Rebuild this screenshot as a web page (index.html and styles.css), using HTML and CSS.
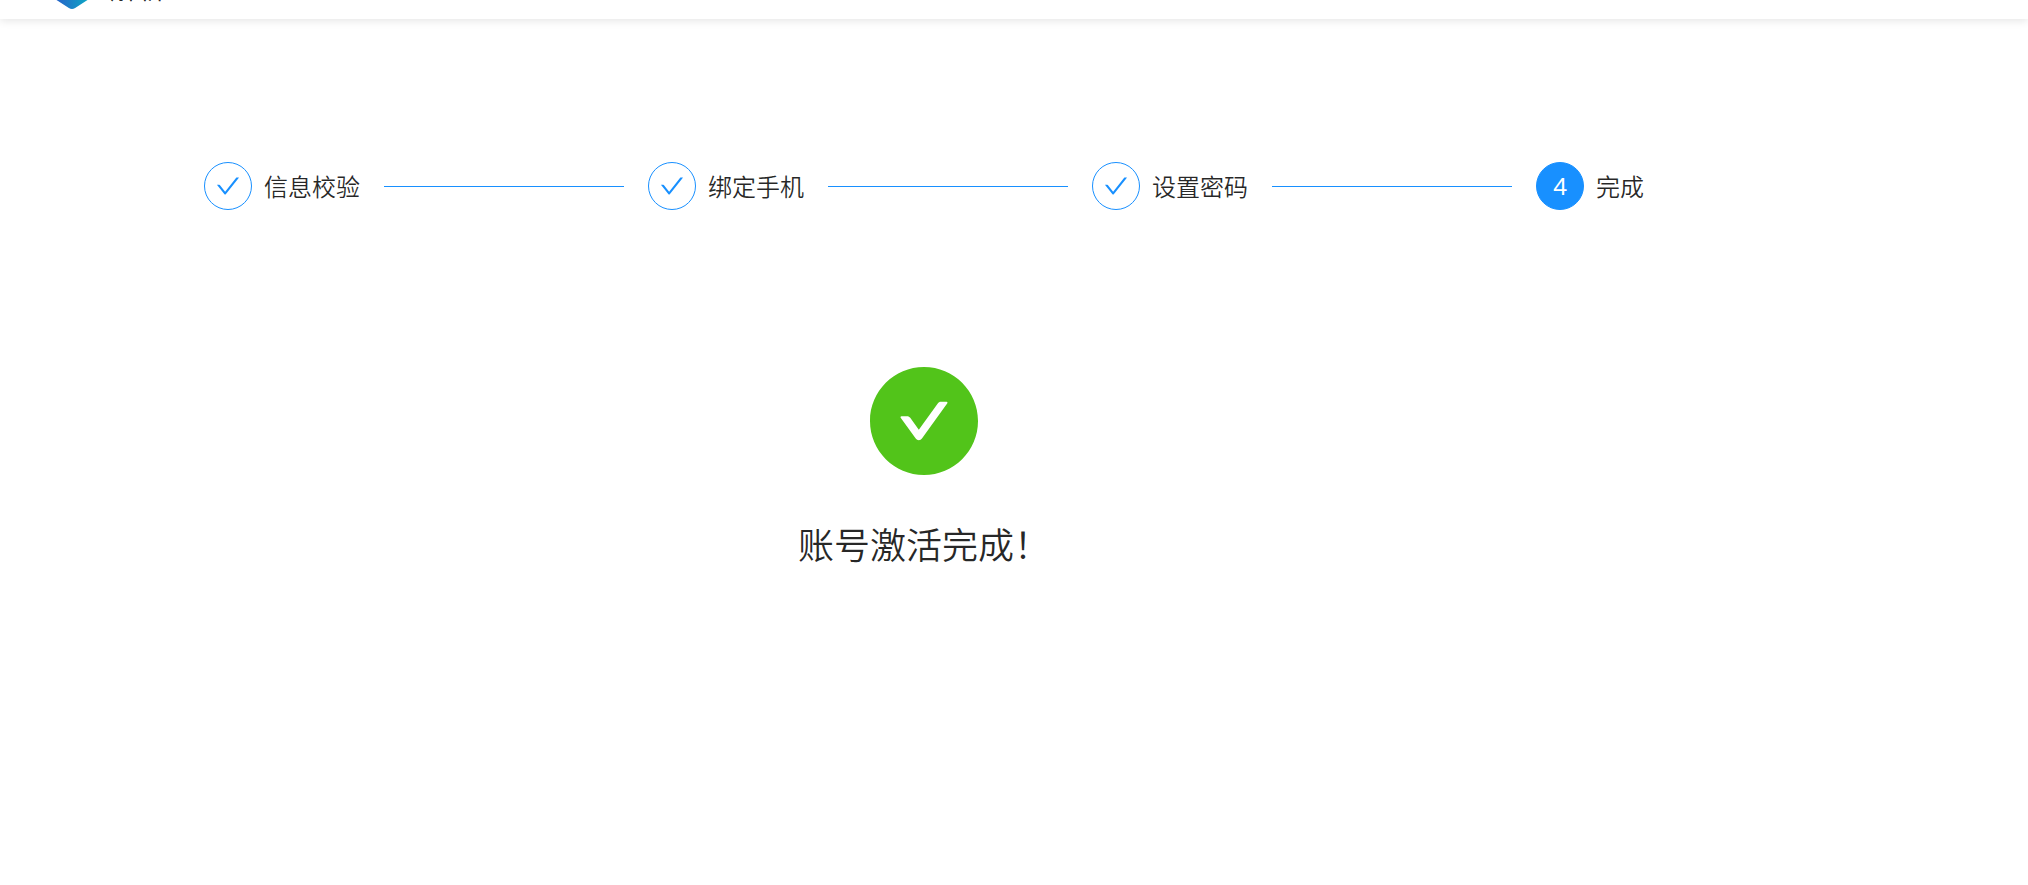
FILE: index.html
```
<!DOCTYPE html>
<html lang="zh-CN">
<head>
  <meta charset="UTF-8">
  <title>账号激活</title>
  <link rel="stylesheet" href="styles.css">
</head>
<body>

<header class="header">
  <svg class="logo" viewBox="0 0 38 44" aria-hidden="true">
    <defs>
      <linearGradient id="logoFill" x1="0" y1="0" x2="1" y2="0">
        <stop offset="0" stop-color="#2a5bc9"/>
        <stop offset="1" stop-color="#0aaec4"/>
      </linearGradient>
    </defs>
    <path fill="url(#logoFill)" d="M16 1q3-2 6 0l14 9q2 1 2 4v16q0 3-2 4l-14 9q-3 2-6 0l-14-9q-2-1-2-4v-16q0-3 2-4z"/>
  </svg>
  <span class="header-title">解析</span>
</header>

<main class="content">
  <ol class="steps">
    <li class="step">
      <span class="step-icon">
        <svg class="check" viewBox="64 64 896 896" aria-hidden="true"><path d="M912 190h-69.900c-9.800 0-19.100 4.500-25.100 12.200L404.700 724.500 207 474a32 32 0 0 0-25.100-12.200H112c-6.700 0-10.400 7.700-6.300 12.900l273.900 347c12.800 16.200 37.400 16.200 50.300 0l488.400-618.900c4.100-5.100.4-12.800-6.300-12.800z"/></svg>
      </span>
      <span class="step-title">信息校验</span>
    </li>
    <li class="step">
      <span class="step-icon">
        <svg class="check" viewBox="64 64 896 896" aria-hidden="true"><path d="M912 190h-69.900c-9.800 0-19.100 4.500-25.100 12.200L404.700 724.500 207 474a32 32 0 0 0-25.100-12.200H112c-6.700 0-10.400 7.700-6.300 12.900l273.900 347c12.800 16.200 37.400 16.200 50.300 0l488.400-618.900c4.100-5.100.4-12.800-6.300-12.800z"/></svg>
      </span>
      <span class="step-title">绑定手机</span>
    </li>
    <li class="step">
      <span class="step-icon">
        <svg class="check" viewBox="64 64 896 896" aria-hidden="true"><path d="M912 190h-69.900c-9.800 0-19.100 4.500-25.100 12.200L404.700 724.500 207 474a32 32 0 0 0-25.100-12.200H112c-6.700 0-10.400 7.700-6.300 12.900l273.900 347c12.800 16.200 37.400 16.200 50.300 0l488.400-618.900c4.100-5.100.4-12.800-6.300-12.800z"/></svg>
      </span>
      <span class="step-title">设置密码</span>
    </li>
    <li class="step step-active" aria-current="step">
      <span class="step-icon">4</span>
      <span class="step-title">完成</span>
    </li>
  </ol>

  <section class="result">
    <svg class="result-icon" viewBox="64 64 896 896" aria-hidden="true"><path d="M512 64C264.600 64 64 264.600 64 512s200.600 448 448 448 448-200.600 448-448S759.400 64 512 64zm193.500 301.700l-210.600 292a31.800 31.800 0 0 1-51.700 0L318.500 484.900c-3.800-5.300 0-12.700 6.500-12.700h46.900c10.200 0 19.900 4.900 25.900 13.300l71.200 98.800 157.200-218c6-8.300 15.600-13.300 25.900-13.300H699c6.500 0 10.300 7.400 6.500 12.700z"/></svg>
    <h1 class="result-title">账号激活完成！</h1>
  </section>
</main>

</body>
</html>
```
FILE: styles.css
```
* {
  box-sizing: border-box;
}

body {
  margin: 0;
  background: #fff;
  color: rgba(0, 0, 0, 0.85);
  font-family: "Noto Sans CJK SC", "Noto Sans", sans-serif;
  font-weight: 350;
}

/* only the bottom edge of the bar stays in view */
.header {
  display: flex;
  align-items: flex-end;
  gap: 18px;
  height: 19px;
  padding: 0 52px 10px;
  overflow: hidden;
  box-shadow: 0 2px 8px rgba(0, 0, 0, 0.1);
}

.logo {
  flex: none;
  width: 40px;
  height: 46px;
}

.header-title {
  padding-bottom: 4px;
  font-size: 28px;
  line-height: 36px;
}

.content {
  max-width: 1848px;
  padding: 143px 204px 0;
}

.steps {
  display: flex;
  margin: 0;
  padding: 0;
  list-style: none;
}

.step {
  display: flex;
  flex: 1;
  align-items: center;
  gap: 12px;
  margin-right: 24px;
}

.step::after {
  content: "";
  flex: 1;
  height: 1px;
  margin-left: 12px;
  background: #1890ff;
}

.step:last-child {
  flex: none;
  margin-right: 0;
}

.step:last-child::after {
  display: none;
}

.step-icon {
  display: flex;
  align-items: center;
  justify-content: center;
  width: 48px;
  height: 48px;
  border: 1px solid #1890ff;
  border-radius: 50%;
  color: #1890ff;
  font-family: "Noto Sans", sans-serif;
  font-size: 24px;
  font-weight: 400;
  line-height: 24px;
}

.step-active .step-icon {
  background: #1890ff;
  color: #fff;
}

.check {
  width: 24px;
  height: 24px;
  fill: currentColor;
}

.step-title {
  font-size: 24px;
  line-height: 48px;
  white-space: nowrap;
}

.result {
  padding-top: 157px;
  text-align: center;
}

.result-icon {
  display: block;
  width: 108px;
  height: 108px;
  margin: 0 auto;
  fill: #52c41a;
}

.result-title {
  margin: 36px 0 0;
  font-size: 36px;
  font-weight: 350;
  line-height: 64px;
}
```
